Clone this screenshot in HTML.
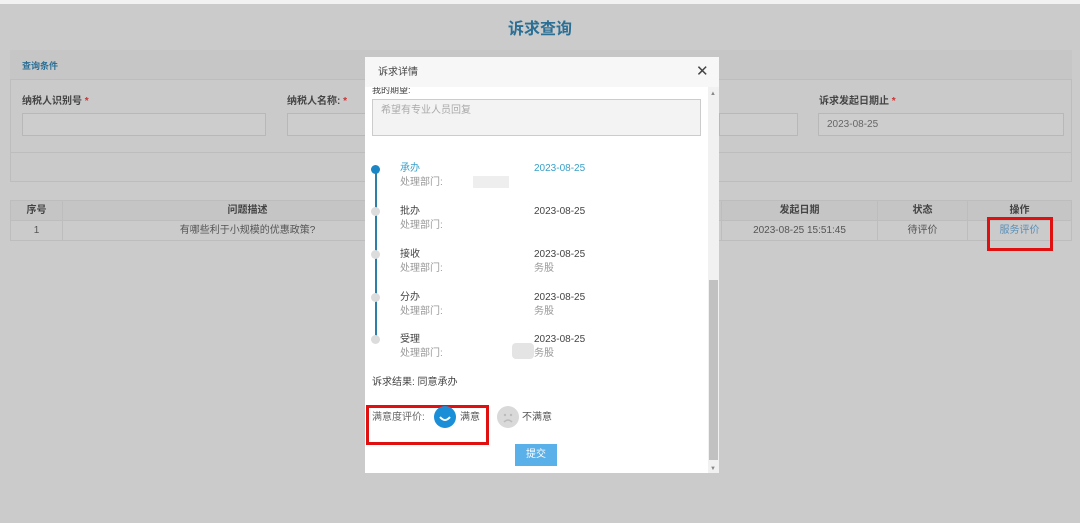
<!DOCTYPE html>
<html><head><meta charset="utf-8"><style>
*{margin:0;padding:0;box-sizing:border-box}
body{width:1080px;height:523px;overflow:hidden;background:#cbcbcb;font-family:"Liberation Sans","Noto Sans CJK SC",sans-serif;font-size:10px;color:#555;position:relative;line-height:12px}
.a{position:absolute}
.top{left:0;top:0;width:1080px;height:4px;background:#f2f2f2}
.title{left:0;width:1080px;top:20px;text-align:center;font-size:16px;font-weight:bold;color:#2b6f95;line-height:20px}
.panel{left:10px;top:50px;width:1062px;height:132px;border:1px solid #bdbdbd;background:#cacaca}
.ph{left:10px;top:50px;width:1062px;height:30px;border-bottom:1px solid #bdbdbd;background:#c6c6c6}
.lbl{font-weight:bold;color:#444;font-size:10px}
.star{color:#c33}
.inp{border:1px solid #b8b8b8;background:#cdcdcd;height:23px}
table{border-collapse:collapse;position:absolute;left:10px;top:200px;width:1062px}
td{border:1px solid #bdbdbd;height:20px;text-align:center;font-size:10px;color:#555}
tr.h td{background:#c5c5c5;font-weight:bold;color:#444}
.modal{left:365px;top:57px;width:354px;height:416px;background:#fff}
.mh{left:365px;top:57px;width:354px;height:30px;background:#f7f7f7}
.sb{left:708px;top:87px;width:11px;height:386px;background:#f1f1f1}
.th{left:709px;top:280px;width:9px;height:180px;background:#c1c1c1}
.red{border:3px solid #e01010}
.dot{width:9px;height:9px;border-radius:50%;background:#dcdcdc}
.st{font-size:10px;color:#444}
.dp{font-size:10px;color:#999}
</style></head><body>
<div class="a top"></div>
<div class="a title">诉求查询</div>
<div class="a panel"></div>
<div class="a ph"></div>
<div class="a" style="left:22px;top:60px;color:#2b6f95;font-size:9px;font-weight:bold">查询条件</div>
<div class="a lbl" style="left:22px;top:96px">纳税人识别号<span class="star"> *</span></div>
<div class="a lbl" style="left:287px;top:96px">纳税人名称:<span class="star"> *</span></div>
<div class="a lbl" style="left:819px;top:96px">诉求发起日期止<span class="star"> *</span></div>
<div class="a inp" style="left:22px;top:113px;width:244px"></div>
<div class="a inp" style="left:287px;top:113px;width:80px"></div>
<div class="a inp" style="left:719px;top:113px;width:79px"></div>
<div class="a inp" style="left:818px;top:113px;width:246px;padding:5px 8px;color:#666">2023-08-25</div>
<div class="a" style="left:10px;top:152px;width:1062px;border-top:1px solid #bdbdbd"></div>
<table>
<tr class="h"><td style="width:52px">序号</td><td style="width:370px">问题描述</td><td></td><td style="width:156px">发起日期</td><td style="width:90px">状态</td><td style="width:104px">操作</td></tr>
<tr><td>1</td><td>有哪些利于小规模的优惠政策?</td><td></td><td>2023-08-25 15:51:45</td><td>待评价</td><td style="color:#5a8fb8">服务评价</td></tr>
</table>
<div class="a red" style="left:987px;top:217px;width:66px;height:34px"></div>

<div class="a modal"></div>
<div class="a mh"></div>
<div class="a" style="left:378px;top:67px;color:#444;font-size:10px">诉求详情</div>
<div class="a" style="left:696px;top:64px;font-size:15px;color:#444;line-height:16px">✕</div>
<div class="a sb"></div>
<div class="a th"></div>
<div class="a" style="left:710px;top:88px;font-size:6px;color:#888">▲</div>
<div class="a" style="left:710px;top:463px;font-size:6px;color:#888">▼</div>
<div class="a" style="left:372px;top:87px;font-size:9px;color:#444;height:7px;overflow:hidden;line-height:6px">我的期望:</div>
<div class="a" style="left:372px;top:99px;width:329px;height:37px;border:1px solid #ccc;background:#f3f3f3;padding:5px 8px;color:#aaa;font-size:10px">希望有专业人员回复</div>
<div class="a" style="left:375px;top:170px;width:2px;height:170px;background:#2e7fa8"></div>
<div class="a dot" style="left:371px;top:165px;background:#1a86c6"></div>
<div class="a dot" style="left:371px;top:207px"></div>
<div class="a dot" style="left:371px;top:250px"></div>
<div class="a dot" style="left:371px;top:293px"></div>
<div class="a dot" style="left:371px;top:335px"></div>
<div class="a st" style="left:400px;top:163px;color:#3aa0c8">承办</div><div class="a st" style="left:534px;top:163px;color:#3aa0c8">2023-08-25</div><div class="a dp" style="left:400px;top:177px">处理部门:</div>
<div class="a st" style="left:400px;top:206px">批办</div><div class="a st" style="left:534px;top:206px">2023-08-25</div><div class="a dp" style="left:400px;top:220px">处理部门:</div>
<div class="a st" style="left:400px;top:249px">接收</div><div class="a st" style="left:534px;top:249px">2023-08-25</div><div class="a dp" style="left:400px;top:263px">处理部门:</div><div class="a dp" style="left:534px;top:263px">务股</div>
<div class="a st" style="left:400px;top:292px">分办</div><div class="a st" style="left:534px;top:292px">2023-08-25</div><div class="a dp" style="left:400px;top:306px">处理部门:</div><div class="a dp" style="left:534px;top:306px">务股</div>
<div class="a st" style="left:400px;top:334px">受理</div><div class="a st" style="left:534px;top:334px">2023-08-25</div><div class="a dp" style="left:400px;top:348px">处理部门:</div><div class="a dp" style="left:534px;top:348px">务股</div>
<div class="a" style="left:473px;top:176px;width:36px;height:12px;background:#eee"></div>
<div class="a" style="left:512px;top:343px;width:22px;height:16px;background:#e4e4e4;border-radius:4px"></div>
<div class="a st" style="left:372px;top:377px">诉求结果: 同意承办</div>
<div class="a red" style="left:366px;top:405px;width:123px;height:40px"></div>
<div class="a" style="left:372px;top:412px;font-size:10px;color:#666">满意度评价:</div>
<div class="a" style="left:434px;top:406px;width:22px;height:22px;border-radius:50%;background:#1a8ed6"></div>
<svg class="a" style="left:434px;top:406px" width="22" height="22"><path d="M6 11 Q11 17 16 11" stroke="#fff" stroke-width="2" fill="none"/></svg>
<div class="a" style="left:460px;top:412px;font-size:10px;color:#555">满意</div>
<div class="a" style="left:497px;top:406px;width:22px;height:22px;border-radius:50%;background:#d9d9d9"></div>
<svg class="a" style="left:497px;top:406px" width="22" height="22"><circle cx="8" cy="9" r="1.2" fill="#bbb"/><circle cx="14" cy="9" r="1.2" fill="#bbb"/><path d="M7 16 Q11 12 15 16" stroke="#bbb" stroke-width="1.5" fill="none"/></svg>
<div class="a" style="left:522px;top:412px;font-size:10px;color:#555">不满意</div>
<div class="a" style="left:515px;top:444px;width:42px;height:22px;background:#5ab0e8;color:#fff;font-size:10px;text-align:center;line-height:22px">提交</div>
</body></html>
